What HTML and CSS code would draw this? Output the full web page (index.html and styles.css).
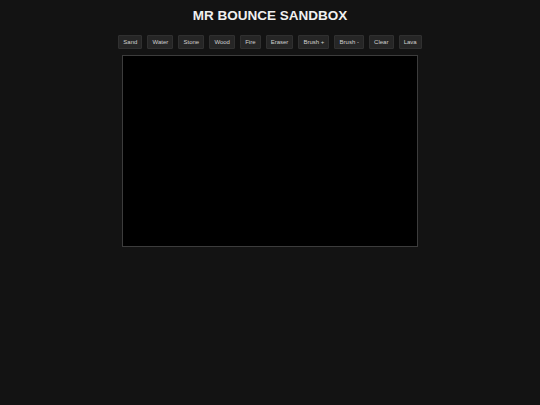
FILE: index.html
```html
<!DOCTYPE html>
<html>
<head>
<meta charset="utf-8">
<title>Mr Bounce Sandbox</title>
<link rel="stylesheet" href="styles.css">
</head>
<body>
<div class="app">
  <h1 class="title">MR BOUNCE SANDBOX</h1>
  <div class="toolbar">
    <button class="tool">Sand</button>
    <button class="tool">Water</button>
    <button class="tool">Stone</button>
    <button class="tool">Wood</button>
    <button class="tool">Fire</button>
    <button class="tool">Eraser</button>
    <button class="tool">Brush +</button>
    <button class="tool">Brush -</button>
    <button class="tool">Clear</button>
    <button class="tool">Lava</button>
  </div>
  <div class="stage"></div>
</div>
</body>
</html>
```
FILE: styles.css
```css
html, body {
  margin: 0;
  padding: 0;
  background: #131313;
  height: 100%;
}
.app {
  display: flex;
  flex-direction: column;
  align-items: center;
  padding-top: 8px;
  font-family: "Liberation Sans", Arial, sans-serif;
}
.title {
  margin: 0;
  font-size: 13.5px;
  line-height: 16px;
  font-weight: bold;
  color: #f0f0f0;
}
.toolbar {
  display: flex;
  gap: 5px;
  margin-top: 11px;
}
.tool {
  font-family: "Liberation Sans", Arial, sans-serif;
  font-size: 6px;
  line-height: 7px;
  padding: 2.5px 4.1px;
  background: #262626;
  color: #d0d0d0;
  border: 1px solid #303030;
  border-radius: 1px;
}
.stage {
  margin-top: 6px;
  width: 294px;
  height: 190px;
  background: #000;
  border: 1px solid #3c3c3c;
}
```
